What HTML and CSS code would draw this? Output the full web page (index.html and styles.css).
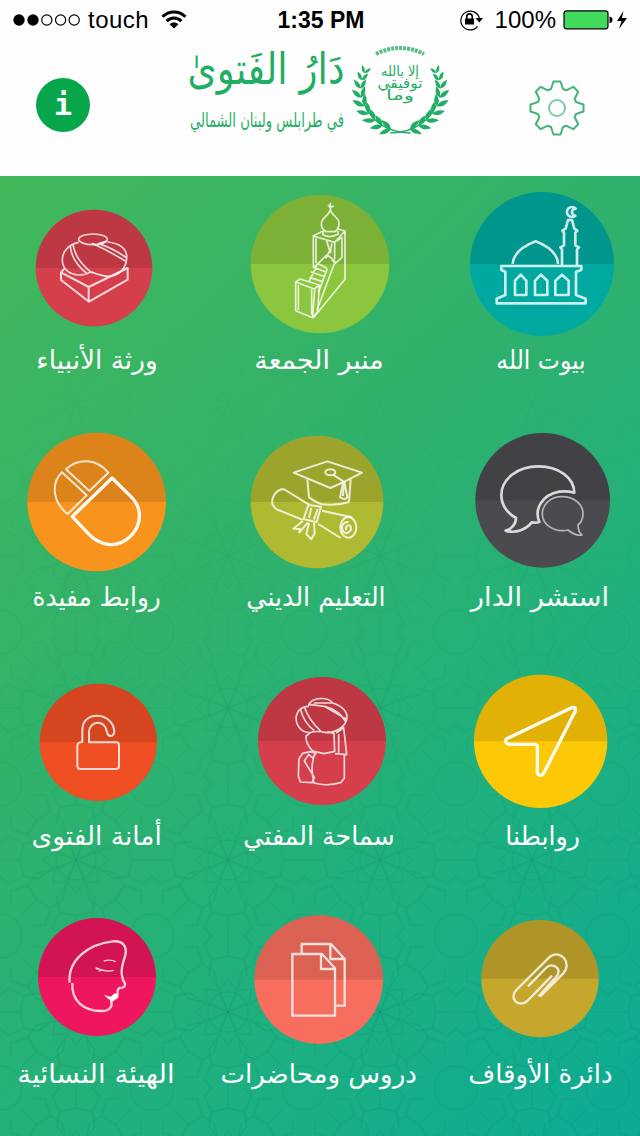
FILE: index.html
```html
<!DOCTYPE html>
<html lang="ar">
  <head>
    <meta charset="utf-8" />
    <title>دار الفتوى</title>
    <link rel="stylesheet" href="styles.css">
  </head>
  <body>
    <header>
      <div class="status">
        <div class="carrier">
          <svg width="70" height="14" viewBox="0 0 70 14">
            <circle cx="6" cy="7" r="5.7"/>
            <circle cx="20" cy="7" r="5.7"/>
            <circle class="ring" cx="33.8" cy="7" r="5.1"/>
            <circle class="ring" cx="47.6" cy="7" r="5.1"/>
            <circle class="ring" cx="61.2" cy="7" r="5.1"/>
          </svg>
          <span class="operator">touch</span>
          <svg width="26" height="20" viewBox="0 0 26 20">
            <path class="wave" d="M1.5 6.8C8 .3 18 .3 24.5 6.8M5.6 11.2C10 7 16 7 20.4 11.2"/>
            <path d="M8.6 14.2C11 11.9 15 11.9 17.4 14.2L13 18.6Z"/>
          </svg>
        </div>
        <b>1:35 PM</b>
        <div class="power">
          <svg width="24" height="22" viewBox="0 0 24 22">
            <path class="ring" d="M18.5 17.5A9.4 9.4 0 1 1 20.3 9"/>
            <path d="M16.5 9H24L20.3 13.6ZM6 9.5H15V15.5H6Z"/>
            <path class="shackle" d="M7.8 10V7.6a2.7 2.7 0 0 1 5.4 0V10"/>
          </svg>
          <span class="percent">100%</span>
          <svg width="66" height="22" viewBox="0 0 66 22">
            <rect class="cell" x="1" y="1.8" width="44" height="18" rx="2.5"/>
            <path d="M46.5 7.5Q49.5 8 49.5 10.8T46.5 14.2ZM60.5 2L54 12H58.5L56 20L64 9H59Z"/>
          </svg>
        </div>
      </div>
      <div class="bar">
        <div class="about">i</div>
        <svg class="logo" width="280" height="100" viewBox="180 38 280 100">
          <text class="name" x="270" y="82" textLength="157" lengthAdjust="spacingAndGlyphs">دَارُ الفَتوىٰ</text>
          <text class="region" x="271" y="125" textLength="154" lengthAdjust="spacingAndGlyphs">في طرابلس ولبنان الشمالي</text>
          <defs>
            <path id="leaf" d="M0 0C5-1 7-4 8-10C3-8 0-5 0 0ZM0 0C-5-2-6-5-6-11C-1-8 0-5 0 0Z"/>
            <g id="branch">
              <use href="#leaf" transform="rotate(-25) translate(40 0) scale(.65)"/>
              <use href="#leaf" transform="rotate(-14) translate(40 0) scale(.75)"/>
              <use href="#leaf" transform="rotate(-2) translate(40 0) scale(.85)"/>
              <use href="#leaf" transform="rotate(11) translate(40 0) scale(.95)"/>
              <use href="#leaf" transform="rotate(24) translate(40 0)"/>
              <use href="#leaf" transform="rotate(37) translate(40 0)"/>
              <use href="#leaf" transform="rotate(50) translate(40 0)"/>
              <use href="#leaf" transform="rotate(63) translate(40 0)"/>
              <use href="#leaf" transform="rotate(76) translate(40 0)"/>
              <path class="stem" d="M-10 43Q26 42 38 10"/>
            </g>
          </defs>
          <use class="wreath" href="#branch" transform="translate(404.500 88)"/>
          <use class="wreath" href="#branch" transform="translate(404.500 88) scale(-1 1)"/>
          <path class="crown" d="M380 52Q404 40 428 52"/>
          <text class="motto" x="404" y="74" textLength="38" lengthAdjust="spacingAndGlyphs">إلا بالله</text>
          <text class="motto" x="404" y="86" textLength="45" lengthAdjust="spacingAndGlyphs">توفيقي</text>
          <text class="motto" x="404" y="98" textLength="28" lengthAdjust="spacingAndGlyphs">وما</text>
        </svg>
        <svg class="gear" width="56" height="56" viewBox="-28 -28 56 56">
          <path d="M-6-19L-3.500-26.500 3.500-26.500 6-19 9.200-17.700 16.300-21.200 21.200-16.300 17.700-9.200 19-6 26.500-3.500 26.500 3.500 19 6 17.700 9.200 21.200 16.300 16.300 21.200 9.200 17.700 6 19 3.500 26.500-3.500 26.500-6 19-9.200 17.700-16.300 21.200-21.200 16.300-17.700 9.200-19 6-26.500 3.500-26.500-3.500-19-6-17.700-9.200-21.200-16.300-16.300-21.200-9.200-17.700Z"/>
          <circle r="8"/>
        </svg>
      </div>
    </header>

    <main>
      <svg class="lattice" width="640" height="960">
        <defs>
          <pattern id="stars" width="152" height="152" patternUnits="userSpaceOnUse">
            <g id="quarter">
              <path id="petal" d="M76 76L68 54L76 43L84 54ZM68 54L57 38L60 24L76 20L92 24L95 38L84 54M60 24L52 8L60 0M92 24L100 8L92 0M76 20V0"/>
              <use href="#petal" transform="rotate(45 76 76)"/>
            </g>
            <use href="#quarter" transform="rotate(90 76 76)"/>
            <use href="#quarter" transform="rotate(180 76 76)"/>
            <use href="#quarter" transform="rotate(270 76 76)"/>
            <circle cx="76" cy="76" r="20"/>
            <circle cx="0" cy="0" r="22"/>
            <circle cx="152" cy="0" r="22"/>
            <circle cx="0" cy="152" r="22"/>
            <circle cx="152" cy="152" r="22"/>
          </pattern>
        </defs>
        <rect width="640" height="960" fill="url(#stars)"/>
      </svg>

      <div class="menu">
        <svg class="tile" viewBox="42 12 582 714">
          <circle cx="336" cy="252" r="216" fill="#00a9a0"/>
          <path class="shade" d="M120 252a216 216 0 0 1 432 0Z"/>
          <g class="bold">
            <path d="M248 252C250 222 275 200 317 184C358 200 383 222 384 252M214 258H454V270L438 275V345L467 356V370H200V356L226 345V275L214 270Z"/>
            <path d="M255 345V302L272 284L289 302V345ZM315 345V302L333 284L352 302V345ZM376 345V302L396 284L416 302V345ZM396 255V208L391 202L402 196V158L397 152L407 146L414 120H426L433 146L442 152L436 158V196L447 202L441 208V255"/>
            <path d="M437 86A15 15 0 1 0 436 107A10 10 0 1 1 437 86Z"/>
          </g>
          <text x="333" y="567" textLength="268" lengthAdjust="spacingAndGlyphs">بيوت الله</text>
        </svg>
        <svg class="tile wide" viewBox="-78 12 750 714">
          <circle cx="300" cy="252" r="208" fill="#8cc63e"/>
          <path class="shade" d="M92 252a208 208 0 0 1 416 0Z"/>
          <g>
            <path d="M331 68V90M324 75L331 83L341 77M331 88C328 108 304 112 304 132C304 143 311 151 318 155H346C352 149 358 140 357 128C356 112 334 106 331 88ZM309 153V164Q330 176 354 163V152"/>
            <path d="M309 153L280 168L344 187L375 153L354 147M280 168V262M375 153V298L280 413M288 175V250M344 187V238M320 182L329 212L318 235M351 183L366 172V232L346 250L335 238M335 190L331 220M284 260L322 224L345 245L291 390M291 250L321 265M280 262L318 276M273 276L315 290M268 292L308 305M290 258L267 305M322 266L295 338"/>
            <path d="M227 306L240 297L298 315L283 327ZM227 306V392L278 413L284 327M298 315L293 396L280 410M235 315V390M275 328V405"/>
          </g>
          <text x="297" y="567" textLength="388" lengthAdjust="spacingAndGlyphs">منبر الجمعة</text>
        </svg>
        <svg class="tile" viewBox="0 12 582 714">
          <circle cx="282" cy="264" r="175" fill="#d53f4b"/>
          <path class="shade" d="M107 264a175 175 0 0 1 350 0Z"/>
          <g>
            <ellipse cx="279" cy="178" rx="43" ry="16"/>
            <path d="M236 187C205 194 187 215 187 240C187 266 207 284 238 285Q260 284 272 275M211 198C213 230 235 260 262 282M219 194C224 226 244 254 276 279M276 190C302 202 342 222 376 243M319 184L296 191C330 202 354 215 380 234M322 186C360 190 382 207 380 236C378 267 355 289 324 289C304 288 285 280 272 275"/>
            <path class="heavy" d="M193 266L183 277V300L267 365L383 299V264L368 270M183 277L266 321L383 264M266 321V365"/>
          </g>
          <text x="291" y="567" textLength="364" lengthAdjust="spacingAndGlyphs">ورثة الأنبياء</text>
        </svg>

        <svg class="tile" viewBox="372 6 582 714">
          <circle cx="668" cy="241" r="202" fill="#4b4a4f"/>
          <path class="shade" d="M466 241a202 202 0 0 1 404 0Z"/>
          <path class="bold" d="M763 218C762 173 716 139 655 139C592 139 544 178 544 225C544 255 561 278 588 294C588 313 574 328 557 332C588 342 620 327 635 307Q648 309 658 306C642 268 665 225 718 215Q742 212 763 218Z"/>
          <path class="faint" d="M726 230C690 230 667 254 667 281C667 315 703 338 744 330C758 342 772 348 786 345Q775 337 774 315C785 306 789 294 789 281C789 252 762 230 726 230Z"/>
          <text x="660" y="557" textLength="415" lengthAdjust="spacingAndGlyphs">استشر الدار</text>
        </svg>
        <svg class="tile wide" viewBox="582 6 750 714">
          <circle cx="951" cy="246" r="199" fill="#b0b932"/>
          <path class="shade" d="M752 246a199 199 0 0 1 398 0Z"/>
          <g class="heavy">
            <path d="M881 158L982 124L1086 158L1035 184L991 204Q950 187 881 158ZM922 178L927 232Q940 242 962 252Q1010 258 1047 246L1052 178"/>
            <ellipse cx="991" cy="157" rx="15" ry="9"/>
            <path d="M999 164L1030 184L1020 232L1035 238L1042 232L1033 184M1032 190L1029 228"/>
            <path d="M851 207C826 208 811 238 819 256Q826 269 840 272L909 300M851 207L927 254M925 255L963 260L950 307L911 297ZM934 263L927 293M953 267L942 299M966 272L1056 292M955 312L1022 354M909 302L880 326L900 327L898 338L923 308M927 308L919 342L934 358L944 340L942 309"/>
            <ellipse cx="1045" cy="322" rx="24" ry="31"/>
            <path d="M1046 306C1027 304 1021 324 1030 335C1042 346 1057 332 1052 319C1045 311 1035 320 1039 330"/>
          </g>
          <text x="948" y="557" textLength="418" lengthAdjust="spacingAndGlyphs">التعليم الديني</text>
        </svg>
        <svg class="tile" viewBox="0 6 582 714">
          <circle cx="290" cy="246" r="208" fill="#f8941d"/>
          <path class="shade" d="M82 246a208 208 0 0 1 416 0Z"/>
          <path class="fine" d="M198 148C235 112 291 116 325 158L268 213ZM186 157C152 190 158 247 203 282L260 226Z"/>
          <path class="big" d="M336 174L217 290L262 338C299 379 350 386 388 352C427 316 428 265 393 230Z"/>
          <text x="290" y="557" textLength="385" lengthAdjust="spacingAndGlyphs">روابط مفيدة</text>
        </svg>

        <svg class="tile" viewBox="372 0 582 714">
          <circle cx="662" cy="244" r="200" fill="#fdc806"/>
          <path class="shade" d="M462 244a200 200 0 0 1 400 0Z"/>
          <path class="big" d="M560 236L755 143Q769 139 766 153L671 340Q662 352 652 341V263Q653 253 642 253H566Q550 246 560 236Z"/>
          <text x="668" y="555" textLength="224" lengthAdjust="spacingAndGlyphs">روابطنا</text>
        </svg>
        <svg class="tile wide" viewBox="582 0 750 714">
          <circle cx="966" cy="243" r="192" fill="#d53f4b"/>
          <path class="shade" d="M774 243a192 192 0 0 1 384 0Z"/>
          <g>
            <path d="M927 132C939 112 983 109 998 129Q1041 143 1041 172C1039 196 1014 218 979 218Q950 211 929 218C901 217 885 193 889 167C893 149 906 140 925 139ZM901 145Q910 187 943 212M913 141Q927 181 962 213M927 133L973 139L1038 177M941 129L998 129M975 139Q1018 151 1038 186M930 219L918 228Q917 252 938 273L972 281L1004 274L1002 220M1002 220L982 215M1009 219L1031 203L1040 284L1005 281M1016 222V278"/>
            <path d="M908 280L931 275L948 280L938 294L926 283L913 303L943 352L936 368L901 366L895 348L897 296ZM943 284Q930 324 942 369Q980 380 1022 368L1033 355V283"/>
          </g>
          <text x="957" y="555" textLength="454" lengthAdjust="spacingAndGlyphs">سماحة المفتي</text>
        </svg>
        <svg class="tile" viewBox="0 0 582 714">
          <circle cx="295" cy="247" r="176" fill="#f04e23"/>
          <path class="shade" d="M119 247a176 176 0 0 1 352 0Z"/>
          <path class="heavy" d="M247 246V210C247 150 338 155 343 214C341 233 323 231 321 216C315 176 268 182 267 216V247H349Q357 247 357 257V318Q357 327 348 327H242Q232 327 232 318V257Q232 247 247 246Z"/>
          <text x="290" y="555" textLength="391" lengthAdjust="spacingAndGlyphs">أمانة الفتوى</text>
        </svg>

        <svg class="tile" viewBox="372 -6 582 714">
          <circle cx="660" cy="236" r="176" fill="#c5a72d"/>
          <path class="shade" d="M484 236a176 176 0 0 1 352 0Z"/>
          <path class="clip" d="M624 259L678 204C693 187 719 201 715 219Q714 225 708 231L656 289M660 290L730 220C757 191 724 146 690 170L589 270C565 293 594 326 622 303L696 227"/>
          <text x="661" y="548" textLength="433" lengthAdjust="spacingAndGlyphs">دائرة الأوقاف</text>
        </svg>
        <svg class="tile wide" viewBox="582 -6 750 714">
          <circle cx="956" cy="239" r="193" fill="#f76d5e"/>
          <path class="shade" d="M763 239a193 193 0 0 1 386 0Z"/>
          <path class="sheet" d="M877 162H966L1005 205V347H877ZM963 163V207H1004M905 158V132H993L1034 177V317H1009M991 133V177H1034"/>
          <text x="956" y="548" textLength="589" lengthAdjust="spacingAndGlyphs">دروس ومحاضرات</text>
        </svg>
        <svg class="tile" viewBox="0 -6 582 714">
          <circle cx="291" cy="231" r="177" fill="#ee175f"/>
          <path class="shade" d="M114 231a177 177 0 0 1 354 0Z"/>
          <path class="face" d="M209 248C203 179 266 132 339 124C368 121 382 139 376 166C369 187 363 202 365 222Q367 239 375 251Q377 264 358 264L353 270L352 291L334 304L335 316Q328 333 307 333C249 334 214 301 217 249"/>
          <path class="lash" d="M287 203Q314 218 341 211M293 208L287 204M303 211L296 213M311 183Q331 177 347 185"/>
          <path class="lips" d="M311 285L333 290L343 280L354 283L350 293L334 305Q327 297 311 285Z"/>
          <text x="288" y="548" textLength="472" lengthAdjust="spacingAndGlyphs">الهيئة النسائية</text>
        </svg>
      </div>
    </main>
  </body>
</html>
```

FILE: styles.css
```css
*{
  box-sizing: border-box;
}
body{
  margin: 0px;
  width: 640px;
  height: 1136px;
  overflow: hidden;
  background: #fefefe;
  font-family: "Liberation Sans", "DejaVu Sans", sans-serif;
}
svg{
  display: block;
}
header{
  height: 176px;
}

/* status bar */
.status{
  display: grid;
  grid-template-columns: 1fr 90px 1fr;
  align-items: center;
  height: 40px;
  padding: 0px 11px 0px 13px;
  font-size: 24px;
  color: #000;
}
.status b{
  font-size: 23px;
  white-space: nowrap;
  text-align: center;
}
.carrier, .power{
  display: flex;
  align-items: center;
}
.power{
  justify-content: flex-end;
}
.operator{
  margin-left: 5px;
  margin-right: 12px;
  letter-spacing: 0.5px;
}
.percent{
  margin-left: 12px;
  margin-right: 7px;
}
.ring{
  fill: none;
  stroke: #000;
  stroke-width: 1.2;
}
.wave{
  fill: none;
  stroke: #000;
  stroke-width: 3;
}
.shackle{
  fill: none;
  stroke: #000;
  stroke-width: 1.6;
}
.cell{
  fill: #43d95c;
  stroke: #000;
  stroke-width: 1.2;
}

/* title bar */
.bar{
  display: flex;
  justify-content: space-between;
  height: 136px;
  padding-left: 36px;
  padding-right: 55px;
}
.about{
  width: 54px;
  height: 54px;
  margin-top: 38px;
  border-radius: 27px;
  background: #08a64b;
  color: #fff;
  font: bold 30px/54px "DejaVu Sans Mono", monospace;
  text-align: center;
}
.logo{
  margin-left: 12px;
  fill: #1fae63;
  overflow: visible;
}
.logo text{
  font-family: "DejaVu Sans", sans-serif;
  text-anchor: middle;
  direction: rtl;
}
.name{
  font-size: 44px;
}
.region{
  font-size: 20px;
}
.motto{
  font-size: 14px;
}
.stem{
  fill: none;
  stroke: #1fae63;
  stroke-width: 1.5;
}
.crown{
  fill: none;
  stroke: #52bf87;
  stroke-width: 4;
  stroke-dasharray: 3 1;
}
.gear{
  margin-top: 40px;
  fill: none;
  stroke: #43b57a;
  stroke-width: 2;
  stroke-linejoin: round;
}
.gear circle{
  stroke: #7fcca3;
}

/* menu */
main{
  position: relative;
  height: 960px;
  padding-top: 8px;
  background: linear-gradient(135deg, #42b85a 0%, #2fb16c 40%, #24b178 60%, #0bab95 100%);
}
.lattice{
  position: absolute;
  top: 0px;
  left: 0px;
  -webkit-mask-image: linear-gradient(transparent 15%, #000 85%);
  mask-image: linear-gradient(transparent 15%, #000 85%);
}
.lattice pattern{
  fill: none;
  stroke: #0a7f6a;
  stroke-opacity: 0.16;
  stroke-width: 1.3;
}
.menu{
  position: relative;
  direction: rtl;
  display: grid;
  grid-template-columns: 194px 250px 194px;
  padding-right: 2px;
}
.tile{
  width: 194px;
  height: 238px;
  overflow: visible;
  fill: none;
  stroke: #fff;
  stroke-opacity: 0.8;
  stroke-width: 5;
  stroke-linejoin: round;
}
.wide{
  width: 250px;
}
.tile circle{
  stroke: none;
}
.tile text{
  font-family: "DejaVu Sans", sans-serif;
  font-size: 78px;
  fill: #fff;
  stroke: none;
  text-anchor: middle;
}
.shade{
  fill: #000;
  fill-opacity: 0.11;
  stroke: none;
}
.heavy{
  stroke-width: 6;
}
.bold{
  stroke-width: 8;
}
.big{
  stroke-width: 10;
  stroke-opacity: 0.95;
}
.fine{
  stroke-width: 6;
}
.faint{
  stroke-opacity: 0.6;
}
.clip, .sheet{
  stroke-width: 7;
}
.face{
  stroke-width: 7;
}
.lash{
  stroke-width: 4;
}
.lips{
  fill: #fff;
  stroke: none;
}
```
